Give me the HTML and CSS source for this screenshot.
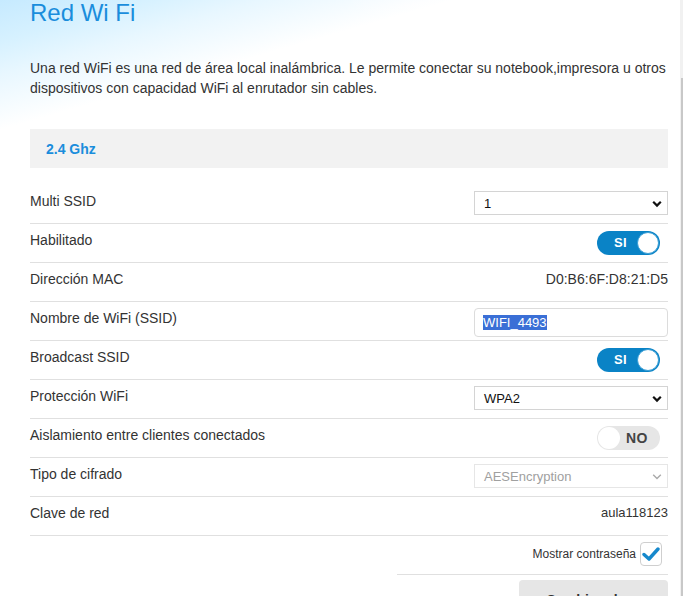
FILE: index.html
```html
<!DOCTYPE html>
<html lang="es">
<head>
<meta charset="utf-8">
<title>Red Wi Fi</title>
<link rel="stylesheet" href="styles.css">
</head>
<body>
<div class="page">
  <header class="hero">
    <h1 class="title">Red Wi Fi</h1>
    <p class="intro">Una red WiFi es una red de área local inalámbrica. Le permite conectar su notebook,impresora u otros dispositivos con capacidad WiFi al enrutador sin cables.</p>
  </header>

  <section class="panel">
    <div class="band">2.4 Ghz</div>

    <div class="row">
      <span class="label">Multi SSID</span>
      <div class="select"><span>1</span><svg class="chev" viewBox="0 0 10 8" width="10" height="8"><path d="M1.2 1.8 L5 5.6 L8.8 1.8" fill="none" stroke="#111" stroke-width="2.2"/></svg></div>
    </div>

    <div class="row">
      <span class="label">Habilitado</span>
      <div class="toggle on"><span class="toggle-text">SI</span><span class="knob"></span></div>
    </div>

    <div class="row">
      <span class="label">Dirección MAC</span>
      <span class="value-text">D0:B6:6F:D8:21:D5</span>
    </div>

    <div class="row">
      <span class="label">Nombre de WiFi (SSID)</span>
      <div class="input"><span class="selected">WIFI_4493</span></div>
    </div>

    <div class="row">
      <span class="label">Broadcast SSID</span>
      <div class="toggle on"><span class="toggle-text">SI</span><span class="knob"></span></div>
    </div>

    <div class="row">
      <span class="label">Protección WiFi</span>
      <div class="select"><span>WPA2</span><svg class="chev" viewBox="0 0 10 8" width="10" height="8"><path d="M1.2 1.8 L5 5.6 L8.8 1.8" fill="none" stroke="#111" stroke-width="2.2"/></svg></div>
    </div>

    <div class="row">
      <span class="label">Aislamiento entre clientes conectados</span>
      <div class="toggle off"><span class="knob"></span><span class="toggle-text">NO</span></div>
    </div>

    <div class="row">
      <span class="label">Tipo de cifrado</span>
      <div class="select disabled"><span>AESEncryption</span><svg class="chev" viewBox="0 0 10 8" width="10" height="8"><path d="M1.2 1.8 L5 5.6 L8.8 1.8" fill="none" stroke="#aaa" stroke-width="1.4"/></svg></div>
    </div>

    <div class="row">
      <span class="label">Clave de red</span>
      <span class="value-text small">aula118123</span>
    </div>

    <div class="show-row">
      <span class="show-label">Mostrar contraseña</span>
      <span class="checkbox"><svg viewBox="0 0 18 16" width="18" height="16"><path d="M2 8.5 L7 13 L16 3" fill="none" stroke="#1688cc" stroke-width="3.4" stroke-linejoin="round" stroke-linecap="round"/></svg></span>
    </div>

    <div class="actions">
      <button class="btn" type="button">Cambiar clave</button>
    </div>
  </section>
</div>
<div class="scrollbar"><div class="thumb"></div></div>
</body>
</html>
```

FILE: styles.css
```css
html, body {
  margin: 0;
  padding: 0;
  background: #fff;
  overflow: hidden;
}

body {
  font-family: "Liberation Sans", Arial, sans-serif;
  color: #333;
  width: 683px;
  height: 596px;
}

.page {
  padding: 0 15px 0 30px;
  background:
    linear-gradient(to right, rgba(255,255,255,0) 50%, #fff 88%) 0 0 / 100% 130px no-repeat,
    linear-gradient(164deg, #c6eaff 0px, #d6f1ff 40px, #e8f7ff 72px, rgba(255,255,255,0) 125px) 0 0 / 100% 130px no-repeat,
    #fff;
}

.hero {
  padding-top: 0;
}

.title {
  margin: 0;
  font-size: 24px;
  line-height: 26px;
  font-weight: normal;
  color: #1a8ddc;
}

.intro {
  margin: 32px 0 0;
  font-size: 14px;
  line-height: 20px;
  color: #333;
  width: 640px;
}

.panel {
  width: 638px;
  margin-top: 31px;
}

.band {
  height: 39px;
  background: #f2f2f2;
  box-sizing: border-box;
  padding: 12px 0 0 16px;
  font-size: 14px;
  line-height: 16px;
  font-weight: bold;
  color: #1a8ddc;
  margin-bottom: 17px;
}

.row {
  display: flex;
  justify-content: space-between;
  align-items: flex-start;
  box-sizing: border-box;
  height: 39px;
  padding-top: 6px;
  border-bottom: 1px solid #e0e0e0;
}

.label {
  font-size: 14px;
  line-height: 20px;
  color: #333;
}

.value-text {
  font-size: 14px;
  line-height: 20px;
  color: #333;
}

.value-text.small {
  font-size: 13px;
}

.select {
  width: 194px;
  height: 24px;
  box-sizing: border-box;
  border: 1px solid #d4d4d4;
  background: #fff;
  display: flex;
  align-items: center;
  justify-content: space-between;
  padding: 1px 5px 0 9px;
  font-size: 13px;
  color: #111;
}

.select.disabled {
  border-color: #e6e6e6;
  color: #a0a0a0;
}

.chev {
  display: block;
}

.input {
  width: 194px;
  height: 29px;
  box-sizing: border-box;
  border: 1px solid #dcdcdc;
  border-radius: 4px;
  padding: 6px 0 0 8px;
  font-size: 13px;
  line-height: 16px;
}

.selected {
  background: #3a6fd6;
  color: #fff;
}

.toggle {
  width: 63px;
  height: 24px;
  box-sizing: border-box;
  border-radius: 12px;
  margin: 1px 8px 0 0;
  display: flex;
  align-items: center;
  font-size: 13px;
  font-weight: bold;
}

.toggle.on {
  background: #0a83c6;
  color: #fff;
  justify-content: space-between;
  padding: 0 1px 0 17px;
}

.toggle.off {
  background: #e6e6e6;
  color: #444;
  padding: 0 0 0 1px;
  gap: 6px;
}

.toggle-text {
  line-height: 16px;
  letter-spacing: 0.3px;
}

.toggle.off .toggle-text {
  font-size: 14px;
}

.knob {
  width: 22px;
  height: 22px;
  border-radius: 50%;
  background: #fff;
  box-sizing: border-box;
}

.toggle.on .knob {
  border: 1px solid #3b9fd6;
}

.show-row {
  margin-left: auto;
  width: 271px;
  height: 39px;
  box-sizing: border-box;
  padding-top: 6px;
  border-bottom: 1px solid #e0e0e0;
  display: flex;
  justify-content: flex-end;
  align-items: flex-start;
  gap: 4px;
  padding-right: 6px;
}

.show-label {
  font-size: 12px;
  line-height: 16px;
  padding-top: 4px;
  color: #333;
}

.checkbox {
  width: 22px;
  height: 24px;
  box-sizing: border-box;
  border: 1px solid #cfcfcf;
  border-radius: 4px;
  display: flex;
  align-items: center;
  justify-content: center;
  background: #fff;
}

.checkbox svg {
  display: block;
}

.actions {
  display: flex;
  justify-content: flex-end;
  padding-top: 5px;
}

.btn {
  width: 149px;
  height: 34px;
  border: none;
  border-radius: 4px;
  background: #e6e6e6;
  font-family: "Liberation Sans", Arial, sans-serif;
  font-size: 14px;
  font-weight: bold;
  color: #333;
  padding: 5px 0 0;
}

.scrollbar {
  position: fixed;
  top: 0;
  right: 0;
  width: 3px;
  height: 596px;
  background: #f1f1f1;
}

.thumb {
  margin: 78px 0 0 1px;
  width: 2px;
  height: 518px;
  background: #c8c8c8;
}
```
